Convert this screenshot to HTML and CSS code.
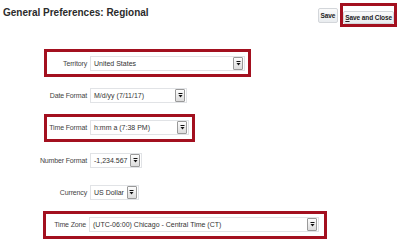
FILE: index.html
```html
<!DOCTYPE html>
<html lang="en">
<head>
  <meta charset="UTF-8">
  <title>General Preferences: Regional</title>
  <link rel="stylesheet" href="styles.css">
</head>
<body>
  <div class="header">
    <h1>General Preferences: Regional</h1>
    <div class="actions">
      <button class="btn">Save</button>
      <div class="mark">
        <button class="btn"><u>S</u>ave and Close</button>
      </div>
    </div>
  </div>

  <div class="form">
    <div class="row mark">
      <span class="label">Territory</span>
      <div class="select w-territory"><span>United States</span><i class="drop"><svg viewBox="0 0 5 5" width="5" height="5"><rect x="0.5" y="0" width="4" height="1" fill="#111"/><path d="M0.5 2H4.5L2.5 4.4Z" fill="#111"/></svg></i></div>
    </div>
    <div class="row">
      <span class="label">Date Format</span>
      <div class="select w-date"><span>M/d/yy (7/11/17)</span><i class="drop"><svg viewBox="0 0 5 5" width="5" height="5"><rect x="0.5" y="0" width="4" height="1" fill="#111"/><path d="M0.5 2H4.5L2.5 4.4Z" fill="#111"/></svg></i></div>
    </div>
    <div class="row mark">
      <span class="label">Time Format</span>
      <div class="select w-time"><span>h:mm a (7:38 PM)</span><i class="drop"><svg viewBox="0 0 5 5" width="5" height="5"><rect x="0.5" y="0" width="4" height="1" fill="#111"/><path d="M0.5 2H4.5L2.5 4.4Z" fill="#111"/></svg></i></div>
    </div>
    <div class="row">
      <span class="label">Number Format</span>
      <div class="select w-number"><span>-1,234.567</span><i class="drop"><svg viewBox="0 0 5 5" width="5" height="5"><rect x="0.5" y="0" width="4" height="1" fill="#111"/><path d="M0.5 2H4.5L2.5 4.4Z" fill="#111"/></svg></i></div>
    </div>
    <div class="row">
      <span class="label">Currency</span>
      <div class="select w-currency"><span>US Dollar</span><i class="drop"><svg viewBox="0 0 5 5" width="5" height="5"><rect x="0.5" y="0" width="4" height="1" fill="#111"/><path d="M0.5 2H4.5L2.5 4.4Z" fill="#111"/></svg></i></div>
    </div>
    <div class="row mark wide">
      <span class="label">Time Zone</span>
      <div class="select w-zone"><span>(UTC-06:00) Chicago - Central Time (CT)</span><i class="drop"><svg viewBox="0 0 5 5" width="5" height="5"><rect x="0.5" y="0" width="4" height="1" fill="#111"/><path d="M0.5 2H4.5L2.5 4.4Z" fill="#111"/></svg></i></div>
    </div>
  </div>
</body>
</html>
```

FILE: styles.css
```css
* { box-sizing: border-box; }
body {
  margin: 0;
  font-family: 'Liberation Sans', Arial, sans-serif;
  background: #fff;
  color: #333;
  width: 400px;
  height: 246px;
  overflow: hidden;
}
.header {
  display: flex;
  justify-content: space-between;
  align-items: flex-start;
  padding: 3px 3px 0 3px;
}
h1 {
  margin: 4px 0 0 0;
  font-size: 10px;
  font-weight: bold;
  color: #2b2b2b;
}
.actions {
  display: flex;
  align-items: center;
  gap: 2px;
}
.btn {
  font-family: 'Liberation Sans', Arial, sans-serif;
  font-size: 6.5px;
  font-weight: bold;
  color: #222;
  background: linear-gradient(#fbfbfb, #e9ecef);
  border: 1px solid #d3d6da;
  border-radius: 2px;
  height: 15px;
  padding: 0 2px;
  line-height: 13px;
  letter-spacing: -0.1px;
}
.actions .mark {
  border: 3px solid #a3101f;
  padding: 0;
}
.actions .mark .btn {
  height: 13px;
  line-height: 11px;
  padding: 0 1px;
}
.form {
  margin-top: 22px;
  display: flex;
  flex-direction: column;
  align-items: flex-start;
  gap: 4.4px;
}
.row {
  display: flex;
  align-items: center;
  gap: 3px;
  height: 28px;
  margin-left: 44px;
  padding: 0 3px 0 0;
  border: 3px solid transparent;
}
.row.mark {
  border-color: #a3101f;
}
.row.wide {
  margin-left: 43px;
  padding-right: 5px;
}
.label {
  width: 40px;
  display: flex;
  justify-content: flex-end;
  white-space: nowrap;
  font-size: 7px;
  letter-spacing: -0.15px;
  color: #444;
}
.select {
  display: flex;
  align-items: center;
  justify-content: space-between;
  gap: 3px;
  height: 15px;
  background: #fff;
  border: 1px solid #e1e3e6;
  padding: 0 1px 0 3px;
  font-size: 7px;
  color: #333;
  white-space: nowrap;
}
.drop {
  display: flex;
  align-items: center;
  justify-content: center;
  flex: none;
  width: 10px;
  height: 13px;
  background: linear-gradient(#fdfdfd, #dcdcdc);
  border: 1px solid #9a9a9a;
  border-radius: 1px;
}
.w-territory { min-width: 155px; }
.w-date { min-width: 97px; }
.w-time { min-width: 99px; }
.w-number { min-width: 51px; }
.w-currency { min-width: 46px; }
.w-zone { min-width: 230px; }
```
